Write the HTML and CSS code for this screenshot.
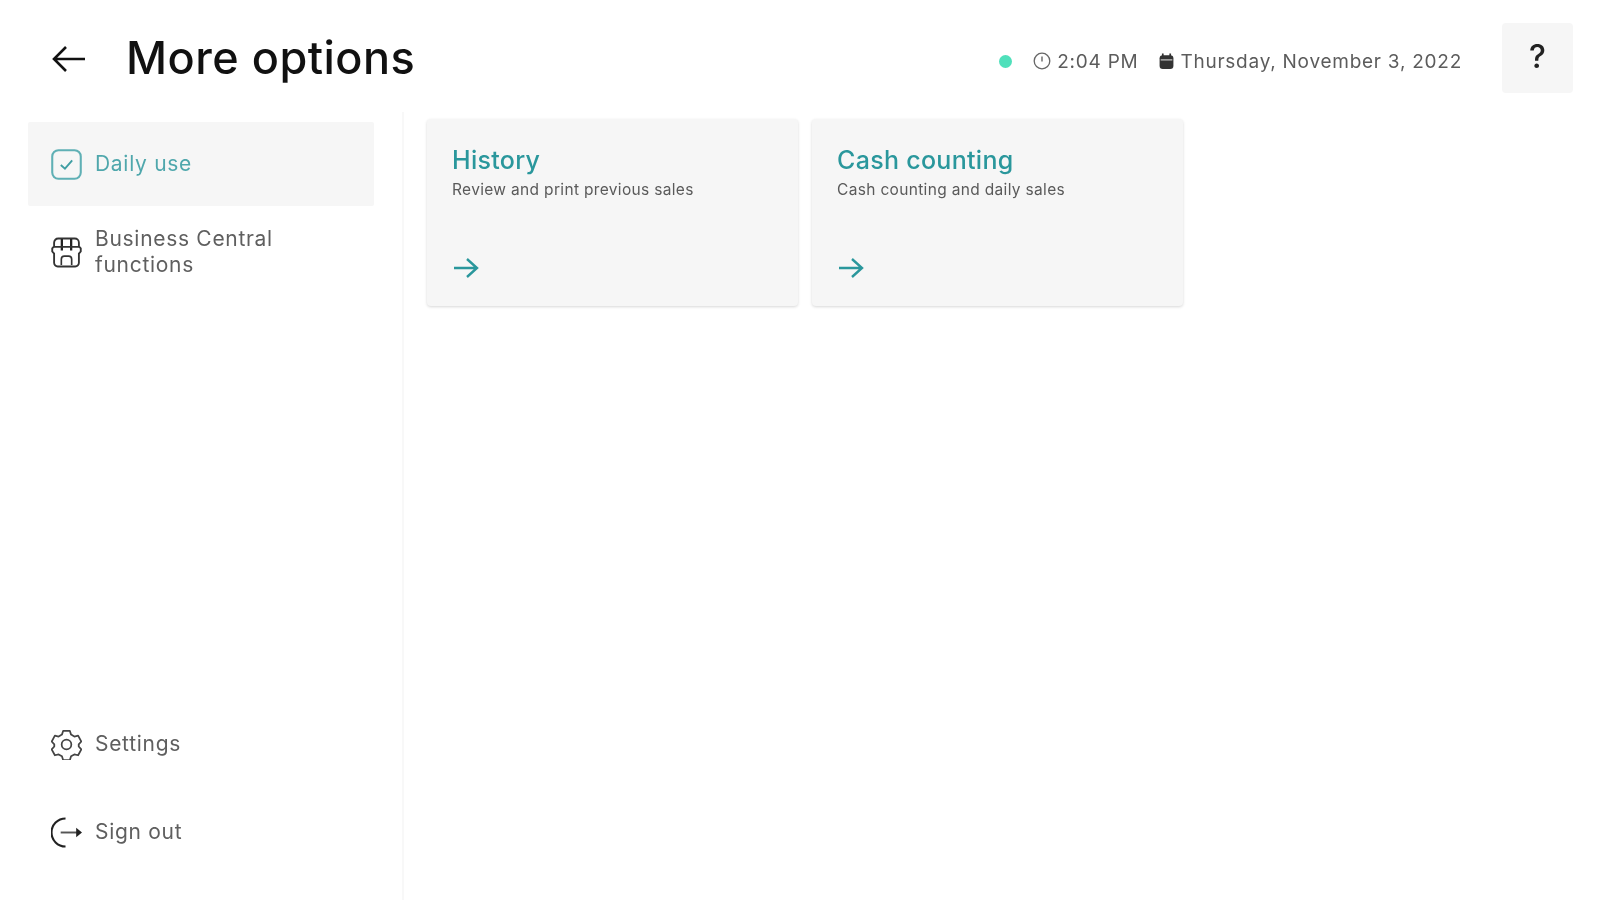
FILE: index.html
```html
<!DOCTYPE html>
<html lang="en">
<head>
<meta charset="utf-8">
<title>More options</title>
<link rel="stylesheet" href="styles.css">
</head>
<body>
<div class="app">
  <header class="topbar">
    <button class="back" aria-label="Back">
      <svg viewBox="0 0 34 30" width="34" height="30"><path d="M33 15H2M14 3 2 15l12 12" fill="none" stroke="#111" stroke-width="2.6"/></svg>
    </button>
    <h1 class="title">More options</h1>
    <div class="status">
      <span class="dot"></span>
      <span class="stat time">
        <svg viewBox="0 0 18 18" width="18" height="18"><circle cx="9" cy="9" r="7.8" fill="none" stroke="#666" stroke-width="1.3"/><path d="M9 4.5V9.5" stroke="#666" stroke-width="1.4" fill="none"/></svg>
        2:04 PM
      </span>
      <span class="stat date">
        <svg viewBox="0 0 14 16" width="15" height="17"><rect x="0.5" y="2" width="13" height="13" rx="3" fill="#333"/><path d="M3.5 0.5V3M10.500 0.5V3" stroke="#333" stroke-width="1.6"/><path d="M1.500 6.500H12.500" stroke="#ddd" stroke-width="1"/></svg>
        Thursday, November 3, 2022
      </span>
    </div>
    <button class="help">?</button>
  </header>
  <div class="main">
    <nav class="sidebar">
      <div class="nav-group">
        <a class="nav-item active">
          <svg class="nav-icon" viewBox="0 0 30 30"><rect x="1.200" y="1.200" width="27.600" height="27.600" rx="6" fill="none" stroke="#5fb0b5" stroke-width="2"/><path d="M9.500 15.500l4 3.500 7-8" fill="none" stroke="#3f9ea3" stroke-width="1.800"/></svg>
          <span>Daily use</span>
        </a>
        <a class="nav-item">
          <svg class="nav-icon" viewBox="0 0 30 30"><path d="M7 1.500H23a4 4 0 0 1 4 4V9l1.800 2v3L27 16v9a3.500 3.500 0 0 1-3.500 3.500H6.500A3.500 3.500 0 0 1 3 25V16L1.200 14v-3L3 9V5.500a4 4 0 0 1 4-4z" fill="none" stroke="#333" stroke-width="1.800"/><path d="M10.500 2V13M19.500 2V13" stroke="#222" stroke-width="2.200"/><path d="M3 9.500H27M10 27v-5.500a3 3 0 0 1 3-3h4a3 3 0 0 1 3 3V27" fill="none" stroke="#333" stroke-width="1.600"/></svg>
          <span>Business Central<br>functions</span>
        </a>
      </div>
      <div class="nav-group">
        <a class="nav-item">
          <svg class="nav-icon" viewBox="0 0 32 32"><path d="M12.500 2h7l1.200 3.800 3.400 2 3.900-.9 3.300 6-2.700 3 0 2.200 2.700 3-3.300 6-3.900-.9-3.400 2-1.200 3.800h-7l-1.200-3.800-3.400-2-3.900.9-3.300-6 2.700-3 0-2.200-2.700-3 3.300-6 3.900.9 3.400-2z" fill="none" stroke="#444" stroke-width="1.800" stroke-linejoin="round"/><circle cx="16" cy="16" r="5" fill="none" stroke="#444" stroke-width="1.800"/></svg>
          <span>Settings</span>
        </a>
        <a class="nav-item">
          <svg class="nav-icon" viewBox="0 0 32 32"><path d="M15 1.500A14.500 14.500 0 0 0 15 30.500" fill="none" stroke="#222" stroke-width="2.200"/><path d="M10 16H27" stroke="#555" stroke-width="2"/><path d="M26 11 32 16l-6 5z" fill="#222"/></svg>
          <span>Sign out</span>
        </a>
      </div>
    </nav>
    <section class="cards">
      <article class="card">
        <h2>History</h2>
        <p>Review and print previous sales</p>
        <svg class="go" viewBox="0 0 26 22" width="26" height="22"><path d="M1 11H24M14 2l10 9-10 9" fill="none" stroke="#2a979c" stroke-width="2.400"/></svg>
      </article>
      <article class="card">
        <h2>Cash counting</h2>
        <p>Cash counting and daily sales</p>
        <svg class="go" viewBox="0 0 26 22" width="26" height="22"><path d="M1 11H24M14 2l10 9-10 9" fill="none" stroke="#2a979c" stroke-width="2.400"/></svg>
      </article>
    </section>
  </div>
</div>
</body>
</html>
```
FILE: styles.css
```css
* { box-sizing: border-box; }
html, body { margin: 0; height: 100%; background: #fff; }
body { font-family: Inter, "Liberation Sans", sans-serif; color: #555; overflow: hidden; }
.app { height: 900px; display: flex; flex-direction: column; filter: blur(0.7px); }

.topbar { height: 112px; flex: none; display: flex; align-items: center; padding: 0 27px 0 52px; }
.back { width: 34px; height: 30px; padding: 0; border: 0; background: none; margin-top: 6px; display: flex; }
.title { margin: 4px 0 0 40px; font-size: 45px; line-height: 52px; font-weight: 500; color: #111; letter-spacing: 0.5px; }
.status { margin-left: auto; display: flex; align-items: center; font-size: 19px; letter-spacing: 0.75px; color: #5c5c5c; margin-top: 10px; }
.dot { width: 13px; height: 13px; border-radius: 50%; background: #4fe0bb; margin-right: 21px; }
.stat { display: flex; align-items: center; gap: 6px; white-space: nowrap; }
.time { margin-right: 21px; }
.help { width: 71px; height: 70px; margin: 4px 0 0 40px; border: 0; border-radius: 4px; background: #f6f6f6; font: 500 32px Inter, sans-serif; color: #222; padding: 0 0 4px; }

.main { flex: 1; display: flex; min-height: 0; }
.sidebar { width: 404px; flex: none; padding: 10px 28px 26px 28px; border-right: 2px solid #f8f8f8; display: flex; flex-direction: column; justify-content: space-between; }
.nav-group { display: flex; flex-direction: column; gap: 4px; }
.nav-item { height: 84px; display: flex; align-items: center; gap: 13px; padding-left: 23px; font-size: 21px; line-height: 26px; letter-spacing: 0.7px; color: #5f5f5f; border-radius: 2px; }
.nav-item.active { background: #f6f6f6; color: #4fa7ac; }
.nav-icon { width: 31px; height: 31px; flex: none; }

.cards { display: flex; align-items: flex-start; gap: 14px; padding: 7px 0 0 23px; }
.card { width: 371px; height: 187px; background: #f6f6f6; border-radius: 4px; box-shadow: 0 1px 3px rgba(0,0,0,.16); padding: 26px 25px 0; display: flex; flex-direction: column; }
.card h2 { margin: 0; font-size: 25px; line-height: 30px; font-weight: 500; letter-spacing: 0.3px; color: #2a979c; }
.card p { margin: 4px 0 0; font-size: 15.500px; line-height: 22px; letter-spacing: 0.33px; color: #5a5a5a; }
.go { margin-top: 56px; margin-left: 1px; }
```
